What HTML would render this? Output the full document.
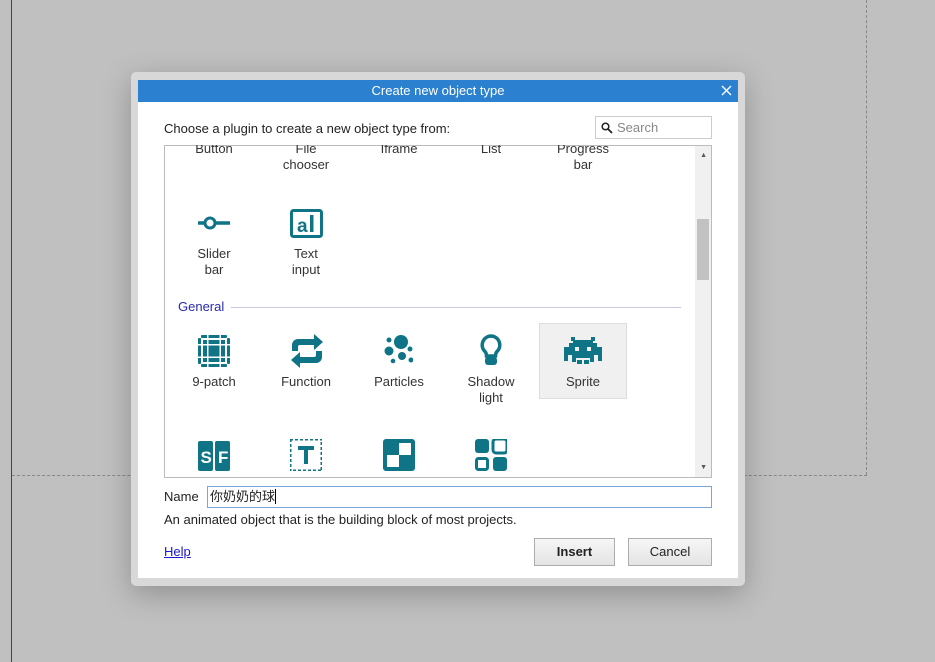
<!DOCTYPE html>
<html><head><meta charset="utf-8"><style>
*{margin:0;padding:0;box-sizing:border-box}
body{width:935px;height:662px;background:#c0c0c0;position:relative;overflow:hidden;font-family:"Liberation Sans","Noto Sans CJK SC",sans-serif;font-size:13px;color:#222}
.abs{position:absolute}
.lbl{position:absolute;width:92px;text-align:center;line-height:16px;font-size:13px;color:#333}
svg.ic{position:absolute}
</style></head><body>
<div class="abs" style="left:11px;top:0;width:1px;height:662px;background:#444"></div>
<div class="abs" style="left:866px;top:0;height:475px;border-left:1px dashed #888"></div>
<div class="abs" style="left:12px;top:475px;width:855px;border-top:1px dashed #888"></div>
<div class="abs" style="left:131px;top:72px;width:614px;height:514px;background:#d8d8d8;border-radius:5px;box-shadow:0 8px 30px rgba(0,0,0,0.25)"></div>
<div class="abs" style="left:138px;top:80px;width:600px;height:498px;background:#fff"></div>
<div class="abs" style="left:138px;top:80px;width:600px;height:22px;background:#2b80cf;color:#fff;text-align:center;font-size:13px;line-height:22px">Create new object type</div>
<svg class="abs" style="left:721px;top:85px" width="11" height="11"><path d="M1 1l9 9M10 1l-9 9" stroke="#fff" stroke-width="1.4"/></svg>
<div class="abs" style="left:164px;top:121px;font-size:13px">Choose a plugin to create a new object type from:</div>
<div class="abs" style="left:595px;top:116px;width:117px;height:23px;border:1px solid #ccc;color:#888;line-height:21px;padding-left:21px">Search</div>
<svg class="abs" style="left:601px;top:122px" width="12" height="12" viewBox="0 0 12 12"><circle cx="4.5" cy="4.5" r="3.3" fill="none" stroke="#222" stroke-width="1.5"/><path d="M7 7l4 4" stroke="#222" stroke-width="1.8"/></svg>
<div class="abs" style="left:164px;top:145px;width:548px;height:333px;border:1px solid #bbb;overflow:hidden">
 <div class="abs" style="right:0;top:0;width:16px;height:333px;background:#f0f0f0"></div>
 <div class="abs" style="right:2px;top:73px;width:12px;height:61px;background:#c2c2c2"></div>
 <div class="abs" style="right:4px;top:6px;font-size:7px;color:#555">▲</div>
 <div class="abs" style="right:4px;top:318px;font-size:7px;color:#555">▼</div>
</div>
<div class="abs" style="left:164px;top:145px;width:531px;height:333px;overflow:hidden">
 <div class="lbl" style="left:4px;top:-4px">Button</div>
 <div class="lbl" style="left:96px;top:-4px">File<br>chooser</div>
 <div class="lbl" style="left:189px;top:-4px">Iframe</div>
 <div class="lbl" style="left:281px;top:-4px">List</div>
 <div class="lbl" style="left:373px;top:-4px">Progress<br>bar</div>
 <svg class="ic" style="left:32px;top:70px" width="36" height="16"><line x1="2" y1="8" x2="34" y2="8" stroke="#0f7486" stroke-width="3.5"/><circle cx="14" cy="8" r="5" fill="#fff" stroke="#0f7486" stroke-width="3"/></svg>
 <div class="lbl" style="left:4px;top:101px">Slider<br>bar</div>
 <svg class="ic" style="left:126px;top:64px" width="33" height="29"><rect x="1.5" y="1.5" width="30" height="26" rx="2" fill="none" stroke="#0f7486" stroke-width="3"/><text x="7" y="23" font-family="Liberation Sans" font-weight="bold" font-size="19" fill="#0f7486">a</text><rect x="20" y="6" width="3.5" height="17" fill="#0f7486"/></svg>
 <div class="lbl" style="left:96px;top:101px">Text<br>input</div>
 <div class="abs" style="left:14px;top:154px;color:#2a2ab0;font-size:13px">General</div>
 <div class="abs" style="left:67px;top:162px;width:450px;height:1px;background:#c8c8e0"></div>
 <div class="abs" style="left:375px;top:178px;width:88px;height:76px;background:#f0f0f0;border:1px solid #ddd"></div>
 <svg class="ic" style="left:34px;top:190px" width="32" height="32" fill="#0f7486"><rect x="0" y="3" width="3" height="26" rx="1"/><rect x="29" y="3" width="3" height="26" rx="1"/><rect x="3" y="0" width="26" height="3" rx="1"/><rect x="3" y="29" width="26" height="3" rx="1"/><rect x="5" y="5" width="22" height="22"/><rect x="9" y="0" width="1.5" height="32" fill="#fff"/><rect x="21.5" y="0" width="1.5" height="32" fill="#fff"/><rect x="0" y="9" width="32" height="1.5" fill="#fff"/><rect x="0" y="21.5" width="32" height="1.5" fill="#fff"/></svg>
 <div class="lbl" style="left:4px;top:229px">9-patch</div>
 <svg class="ic" style="left:126px;top:188px" width="34" height="36" fill="#0f7486"><path d="M2 18V12a6 6 0 0 1 6-6h16V1l9 8-9 8v-5H10a2 2 0 0 0-2 2v4z"/><path d="M32 18v6a6 6 0 0 1-6 6H10v5l-9-8 9-8v5h14a2 2 0 0 0 2-2v-4z"/></svg>
 <div class="lbl" style="left:96px;top:229px">Function</div>
 <svg class="ic" style="left:219px;top:190px" width="30" height="30" fill="#0f7486"><circle cx="18" cy="7" r="7"/><circle cx="6" cy="5" r="2.5"/><circle cx="6" cy="16" r="4.5"/><circle cx="19" cy="21" r="4"/><circle cx="27" cy="14" r="2.5"/><circle cx="28" cy="25" r="2.5"/><circle cx="10" cy="26" r="2.3"/></svg>
 <div class="lbl" style="left:189px;top:229px">Particles</div>
 <svg class="ic" style="left:315px;top:188px" width="24" height="36"><path d="M12 3a9 9 0 0 0-6 15.5c1 1 1.5 3 1.5 4.5h9c0-1.5.5-3.5 1.5-4.5A9 9 0 0 0 12 3z" fill="none" stroke="#0f7486" stroke-width="3.5"/><rect x="6" y="24" width="12" height="8" rx="3" fill="#0f7486"/></svg>
 <div class="lbl" style="left:281px;top:229px">Shadow<br>light</div>
 <svg class="ic" style="left:400px;top:192px" width="38" height="28" fill="#0f7486"><rect x="7" y="0" width="4" height="4"/><rect x="27" y="0" width="4" height="4"/><rect x="9" y="3" width="20" height="4"/><rect x="5" y="6" width="28" height="5"/><rect x="0" y="10" width="38" height="8"/><rect x="0" y="17" width="4" height="7"/><rect x="34" y="17" width="4" height="7"/><rect x="8" y="17" width="22" height="4"/><rect x="8" y="20" width="4" height="5"/><rect x="26" y="20" width="4" height="5"/><rect x="13" y="23" width="5" height="4"/><rect x="20" y="23" width="5" height="4"/><rect x="11" y="10" width="4" height="4" fill="#f0f0f0"/><rect x="23" y="10" width="4" height="4" fill="#f0f0f0"/></svg>
 <div class="lbl" style="left:373px;top:229px">Sprite</div>
 <svg class="ic" style="left:34px;top:296px" width="32" height="30"><rect x="0" y="0" width="15" height="30" rx="2" fill="#0f7486"/><rect x="17" y="0" width="15" height="30" rx="2" fill="#0f7486"/><text x="2.5" y="22" font-family="Liberation Sans" font-weight="bold" font-size="17" fill="#fff">S</text><text x="20" y="22" font-family="Liberation Sans" font-weight="bold" font-size="17" fill="#fff">F</text></svg>
 <svg class="ic" style="left:126px;top:294px" width="32" height="32" fill="#0f7486"><path d="M0 0h32v32H0z" fill="none" stroke="#0f7486" stroke-width="3" stroke-dasharray="3 2"/><rect x="8" y="7" width="16" height="4"/><rect x="14" y="7" width="4" height="18"/></svg>
 <svg class="ic" style="left:219px;top:294px" width="32" height="32"><rect width="32" height="32" rx="3" fill="#0f7486"/><rect x="4" y="16" width="12" height="12" fill="#fff"/><rect x="16" y="4" width="12" height="12" fill="#fff"/></svg>
 <svg class="ic" style="left:311px;top:294px" width="32" height="32" fill="#0f7486"><rect x="0" y="0" width="14" height="14" rx="3"/><rect x="18" y="0" width="14" height="14" rx="3" fill="none" stroke="#0f7486" stroke-width="3"/><rect x="1.5" y="19.5" width="11" height="11" rx="2" fill="none" stroke="#0f7486" stroke-width="3"/><rect x="18" y="18" width="14" height="14" rx="3"/></svg>
</div>
<div class="abs" style="left:164px;top:489px">Name</div>
<div class="abs" style="left:207px;top:486px;width:505px;height:22px;border:1px solid #7aa6d6;padding-left:2px;line-height:20px;font-size:13px;font-family:'Liberation Sans','Noto Sans CJK SC',sans-serif">你奶奶的球<span style="border-left:1px solid #000"></span></div>
<div class="abs" style="left:164px;top:512px">An animated object that is the building block of most projects.</div>
<div class="abs" style="left:164px;top:544px;color:#1a1ad0;text-decoration:underline">Help</div>
<div class="abs" style="left:534px;top:538px;width:81px;height:28px;border:1px solid #adadad;background:linear-gradient(#f6f6f6,#e4e4e4);text-align:center;line-height:26px;font-weight:bold">Insert</div>
<div class="abs" style="left:628px;top:538px;width:84px;height:28px;border:1px solid #adadad;background:linear-gradient(#f6f6f6,#e4e4e4);text-align:center;line-height:26px">Cancel</div>
</body></html>
